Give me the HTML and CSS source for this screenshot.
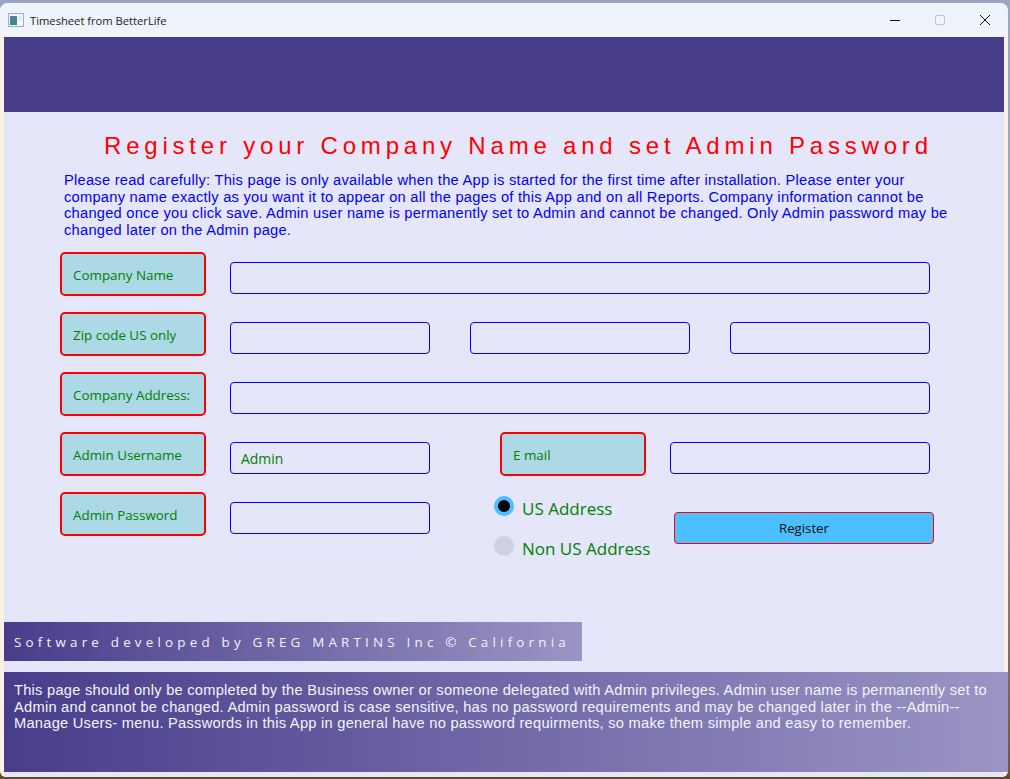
FILE: index.html
```html
<!DOCTYPE html>
<html lang="en">
<head>
    <meta charset="UTF-8">
    <meta name="viewport" content="width=device-width, initial-scale=1.0">
    <title>Timesheet from BetterLife</title>
    <link rel="stylesheet" href="styles.css">
</head>
<body>
    <div class="window">
        <div class="titlebar">
            <svg class="app-icon" width="16" height="14" viewBox="0 0 16 14">
                <rect x="0.5" y="0.5" width="15" height="13" fill="#f4f6f8" stroke="#a9adb3"/>
                <rect x="2" y="3" width="7" height="9" fill="#3f8a80"/>
                <rect x="2" y="3" width="7" height="3" fill="#5d7f9e"/>
                <rect x="10" y="3" width="4" height="5" fill="#dfeee6"/>
            </svg>
            <span class="window-title">Timesheet from BetterLife</span>
            <div class="window-buttons">
                <svg width="10" height="10" viewBox="0 0 10 10"><path d="M0 5.5H10" stroke="#111" stroke-width="1"/></svg>
                <svg width="10" height="10" viewBox="0 0 10 10"><rect x="0.5" y="0.5" width="9" height="9" rx="1.5" fill="none" stroke="#c4c6cb"/></svg>
                <svg width="10" height="10" viewBox="0 0 10 10"><path d="M0 0L10 10M10 0L0 10" stroke="#111" stroke-width="1"/></svg>
            </div>
        </div>
        <div class="content">
            <div class="banner"></div>
            <h1>Register your Company Name and set Admin Password</h1>
            <p class="notice">Please read carefully: This page is only available when the App is started for the first time after installation. Please enter your company name exactly as you want it to appear on all the pages of this App and on all Reports. Company information cannot be changed once you click save. Admin user name is permanently set to Admin and cannot be changed. Only Admin password may be changed later on the Admin page.</p>
            <form class="reg-form">
                <div class="row">
                    <label class="tag" for="company">Company Name</label>
                    <input class="field field-full" type="text" id="company">
                </div>
                <div class="row">
                    <label class="tag" for="zip">Zip code US only</label>
                    <input class="field field-zip" type="text" id="zip">
                    <input class="field field-city" type="text">
                    <input class="field field-state" type="text">
                </div>
                <div class="row">
                    <label class="tag" for="address">Company Address:</label>
                    <input class="field field-full" type="text" id="address">
                </div>
                <div class="row">
                    <label class="tag" for="user">Admin Username</label>
                    <input class="field field-half" type="text" id="user" value="Admin">
                    <label class="tag tag-email" for="email">E mail</label>
                    <input class="field field-email" type="text" id="email">
                </div>
                <div class="row">
                    <label class="tag" for="pass">Admin Password</label>
                    <input class="field field-half" type="password" id="pass">
                    <div class="radios">
                        <div class="radio-row">
                            <span class="radio radio-on"></span>
                            <span>US Address</span>
                        </div>
                        <div class="radio-row">
                            <span class="radio"></span>
                            <span>Non US Address</span>
                        </div>
                    </div>
                    <button class="register" type="button">Register</button>
                </div>
            </form>
            <div class="credit">Software developed by GREG MARTINS Inc © California</div>
            <div class="help">This page should only be completed by the Business owner or someone delegated with Admin privileges. Admin user name is permanently set to Admin and cannot be changed. Admin password is case sensitive, has no password requirements and may be changed later in the --Admin-- Manage Users- menu. Passwords in this App in general have no password requirments, so make them simple and easy to remember.</div>
        </div>
    </div>
</body>
</html>
```

FILE: styles.css
```css
html, body {
    height: 100%;
}
body {
    margin: 0;
    overflow: hidden;
    background: linear-gradient(#9aa6c4 0, #9aa6c4 50%, #6b5a3c 99%, #5c4a30 100%);
    font-family: "Liberation Sans", Arial, sans-serif;
}
.window {
    width: 1008px;
    height: 774px;
    margin-top: 3px;
    box-sizing: border-box;
    border-radius: 8px 8px 6px 6px;
    background-color: #fdf1e6;
    overflow: hidden;
}
.titlebar {
    height: 34px;
    background-color: #eff3fb;
    display: flex;
    align-items: center;
    padding-left: 8px;
    font-family: "Open Sans", sans-serif;
    font-size: 11.2px;
    color: #222;
}
.app-icon {
    margin-right: 6px;
}
.window-buttons {
    margin-left: auto;
    display: flex;
    gap: 35px;
    padding-right: 18px;
}
.content {
    margin: 0 0 0 4px;
    width: 1000px;
    height: 740px;
    background-color: #e6e6fa;
}
.banner {
    height: 75px;
    background-color: #483d8b;
}
h1 {
    margin: 0;
    padding: 20px 0 0 100px;
    font-size: 24px;
    font-weight: normal;
    line-height: 28px;
    letter-spacing: 4.8px;
    color: red;
    white-space: nowrap;
}
.notice {
    margin: 12px 0 0 60px;
    width: 890px;
    font-size: 14.67px;
    line-height: 16.5px;
    letter-spacing: 0.25px;
    color: blue;
}
.reg-form {
    margin: 14px 0 0 56px;
    display: flex;
    flex-direction: column;
    gap: 16px;
    font-family: "Open Sans", sans-serif;
}
.row {
    display: flex;
    align-items: flex-end;
    height: 44px;
}
.tag {
    width: 146px;
    height: 44px;
    box-sizing: border-box;
    padding: 1px 0 0 11px;
    display: flex;
    align-items: center;
    border: 2px solid red;
    border-radius: 5px;
    background-color: #add8e6;
    color: green;
    font-size: 13.4px;
    flex-shrink: 0;
}
.field {
    height: 32px;
    box-sizing: border-box;
    margin-bottom: 2px;
    margin-left: 24px;
    padding: 0 10px;
    border: 1px solid blue;
    border-radius: 4px;
    background: transparent;
    color: green;
    font-family: inherit;
    font-size: 13.9px;
    outline: none;
}
.field-full {
    width: 700px;
}
.field-zip, .field-half {
    width: 200px;
}
.field-city {
    width: 220px;
    margin-left: 40px;
}
.field-state {
    width: 200px;
    margin-left: 40px;
}
.tag-email {
    margin-left: 70px;
}
.field-email {
    width: 260px;
}
.radios {
    margin: 3px 0 0 64px;
    align-self: flex-start;
    width: 180px;
    display: flex;
    flex-direction: column;
    gap: 14px;
    color: green;
    font-size: 17px;
}
.radio-row {
    display: flex;
    align-items: center;
    gap: 8px;
    height: 26px;
}
.radio {
    width: 20px;
    height: 20px;
    box-sizing: border-box;
    border-radius: 50%;
    background-color: #d0d0e0;
    margin-top: -4px;
}
.radio-on {
    background-color: #000;
    border: 4px solid #4bbfff;
}
.register {
    width: 260px;
    height: 32px;
    margin-bottom: -8px;
    border: 1px solid red;
    border-radius: 4px;
    background-color: #4bbfff;
    color: #111;
    font-family: inherit;
    font-size: 13.2px;
}
.credit {
    margin-top: 86px;
    width: 578px;
    height: 39px;
    box-sizing: border-box;
    padding-left: 10px;
    display: flex;
    align-items: center;
    background: linear-gradient(to right, #483d8b, #9a95c4);
    color: #f2f2fa;
    font-family: "Open Sans", sans-serif;
    font-size: 13.4px;
    letter-spacing: 4.2px;
    white-space: nowrap;
}
.help {
    margin-top: 11px;
    width: 1004px;
    height: 100px;
    box-sizing: border-box;
    padding: 10px 10px 0;
    background: linear-gradient(to right, #483d8b, #9a95c4);
    color: #f4f4fb;
    font-size: 14.67px;
    line-height: 16.5px;
    letter-spacing: 0.25px;
}
```
